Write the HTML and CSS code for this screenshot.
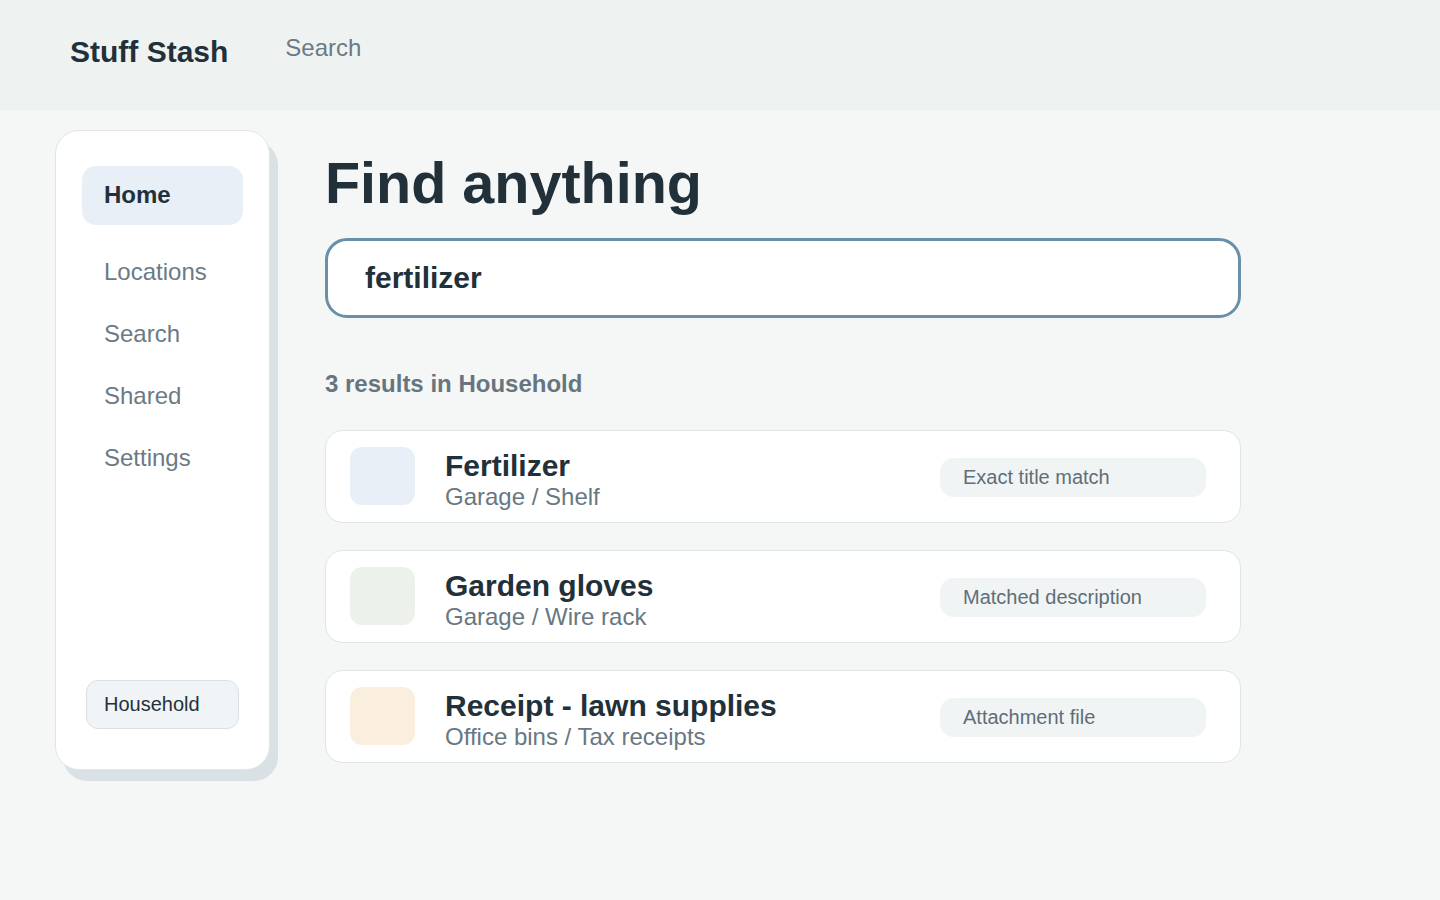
FILE: index.html
```html
<!DOCTYPE html>
<html lang="en">
<head>
    <meta charset="UTF-8">
    <title>Stuff Stash</title>
    <link rel="stylesheet" href="styles.css">
</head>
<body>

    <header class="topbar">
        <div class="logo">Stuff Stash</div>
        <a class="top-link" href="#">Search</a>
    </header>

    <div class="layout">

        <aside class="sidebar">
            <nav class="nav">
                <a class="nav-item active" href="#">Home</a>
                <a class="nav-item" href="#">Locations</a>
                <a class="nav-item" href="#">Search</a>
                <a class="nav-item" href="#">Shared</a>
                <a class="nav-item" href="#">Settings</a>
            </nav>
            <div class="space-pick">Household</div>
        </aside>

        <main class="main">
            <h1 class="title">Find anything</h1>

            <input class="search-box" type="text" value="fertilizer">

            <h3 class="result-count">3 results in Household</h3>

            <div class="results">
                <div class="card">
                    <div class="thumb blue"></div>
                    <div class="card-text">
                        <div class="item-name">Fertilizer</div>
                        <div class="item-place">Garage / Shelf</div>
                    </div>
                    <span class="tag">Exact title match</span>
                </div>

                <div class="card">
                    <div class="thumb green"></div>
                    <div class="card-text">
                        <div class="item-name">Garden gloves</div>
                        <div class="item-place">Garage / Wire rack</div>
                    </div>
                    <span class="tag">Matched description</span>
                </div>

                <div class="card">
                    <div class="thumb sand"></div>
                    <div class="card-text">
                        <div class="item-name">Receipt - lawn supplies</div>
                        <div class="item-place">Office bins / Tax receipts</div>
                    </div>
                    <span class="tag">Attachment file</span>
                </div>
            </div>
        </main>

    </div>

</body>
</html>
```

FILE: styles.css
```css
* {
    box-sizing: border-box;
    font-family: "Liberation Sans", Arial, sans-serif;
}

body {
    margin: 0;
    background: #f5f7f7;
    color: #22303a;
}

.topbar {
    height: 110px;
    padding: 35px 70px 0 70px;
    display: flex;
    align-items: flex-start;
    gap: 57px;
    background: #eef3f2;
}

.logo {
    font-size: 30px;
    font-weight: bold;
    color: #22303a;
}

.top-link {
    margin-top: -1px;
    font-size: 24px;
    color: #6b7a85;
    text-decoration: none;
}

.layout {
    display: flex;
    align-items: flex-start;
    gap: 55px;
    padding: 20px 0 40px 55px;
}

.sidebar {
    width: 215px;
    height: 640px;
    padding: 35px 26px 40px 26px;
    display: flex;
    flex-direction: column;
    background: white;
    border: 1px solid #dfe5e8;
    border-radius: 24px;
    box-shadow: 8px 11px 0 0 #dae1e5;
}

.nav {
    display: flex;
    flex-direction: column;
}

.nav-item {
    padding: 17px 22px 18px 22px;
    font-size: 24px;
    line-height: 27px;
    color: #6b7a85;
    text-decoration: none;
}

.nav-item.active {
    padding: 15px 22px 17px 22px;
    margin-bottom: 16px;
    font-weight: bold;
    color: #22303a;
    background: #e8eff6;
    border-radius: 14px;
}

.space-pick {
    margin-top: auto;
    margin-left: 4px;
    width: 153px;
    height: 49px;
    padding: 0 17px;
    font-size: 20px;
    line-height: 47px;
    color: #24313a;
    background: #f0f4f6;
    border: 1px solid #d9e1e5;
    border-radius: 12px;
}

.main {
    width: 916px;
    padding-top: 20px;
}

.title {
    margin: 0;
    font-size: 57.5px;
    font-weight: bold;
    line-height: 67px;
    color: #22303a;
}

.search-box {
    display: block;
    width: 100%;
    height: 80px;
    margin-top: 21px;
    padding: 0 37px;
    font-size: 30px;
    font-weight: bold;
    color: #22303a;
    background: white;
    border: 3px solid #6a8fa8;
    border-radius: 22px;
    outline: none;
}

.result-count {
    margin: 52px 0 0 0;
    font-size: 24px;
    line-height: 28px;
    font-weight: bold;
    color: #66757f;
}

.results {
    margin-top: 32px;
    display: flex;
    flex-direction: column;
    gap: 27px;
}

.card {
    height: 93px;
    padding: 0 34px 0 24px;
    display: flex;
    align-items: center;
    background: white;
    border: 1px solid #dfe4e6;
    border-radius: 18px;
}

.thumb {
    width: 65px;
    height: 58px;
    margin-top: -1px;
    border-radius: 12px;
    flex-shrink: 0;
}

.blue { background: #e8eff6; }
.green { background: #ecf2e9; }
.sand { background: #faefdf; }

.card-text {
    flex: 1;
    margin-left: 30px;
    padding-top: 7px;
}

.item-name {
    font-size: 30px;
    font-weight: bold;
    line-height: 34px;
    color: #22303a;
}

.item-place {
    font-size: 24px;
    line-height: 28px;
    color: #687882;
}

.tag {
    width: 266px;
    height: 39px;
    margin-top: 2px;
    padding-left: 23px;
    font-size: 20px;
    line-height: 39px;
    color: #5f6e78;
    background: #f0f4f5;
    border-radius: 14px;
}
```
